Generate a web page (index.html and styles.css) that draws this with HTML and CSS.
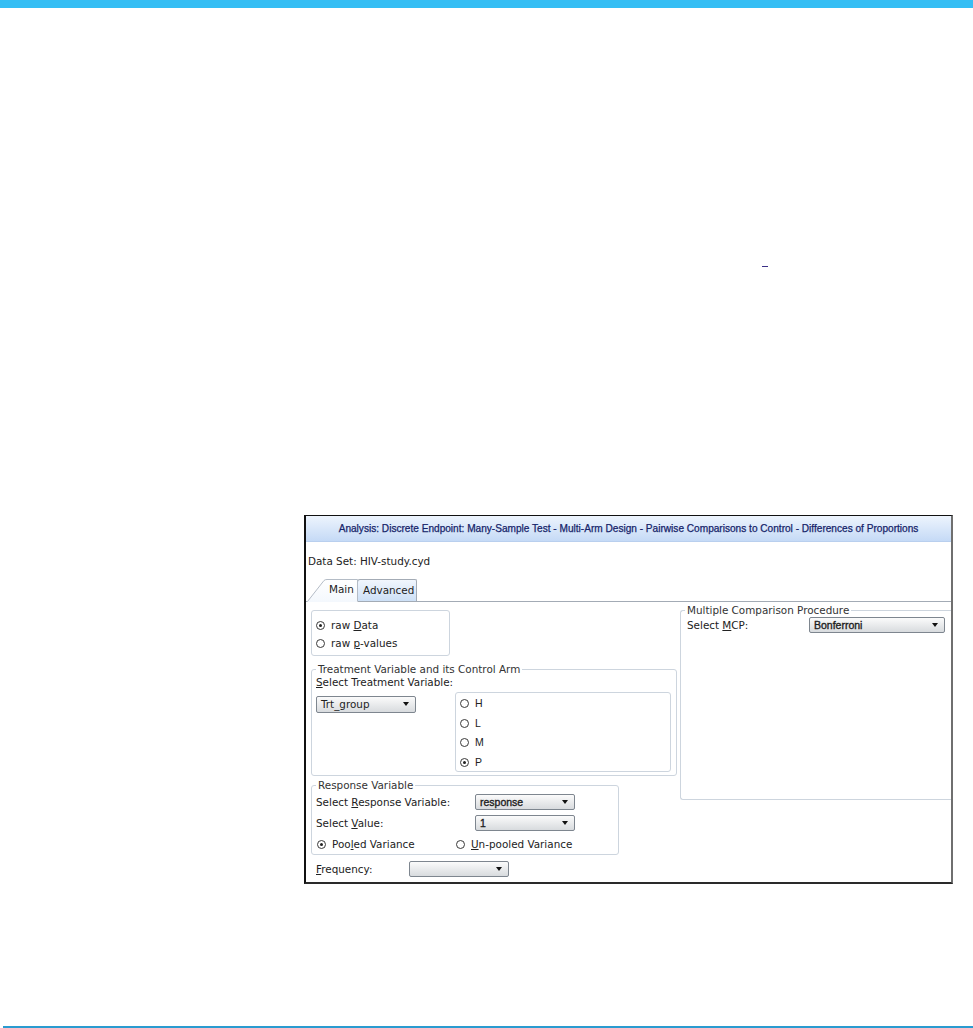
FILE: index.html
```html
<!DOCTYPE html>
<html lang="en">
<head>
    <meta charset="UTF-8">
    <title>Analysis: Discrete Endpoint</title>
    <link rel="stylesheet" href="styles.css">
</head>
<body>
    <div class="topbar"></div>
    <div class="page">
        <div class="note-row"><span class="link-mark"></span></div>

        <div class="dialog">
            <div class="dialog-title">Analysis: Discrete Endpoint: Many-Sample Test - Multi-Arm Design - Pairwise Comparisons to Control - Differences of Proportions</div>
            <div class="dialog-body">
                <div class="dataset">Data Set: HIV-study.cyd</div>

                <div class="tabs">
                    <div class="tab tab-main">
                        <svg class="tab-shape" width="51" height="23" viewBox="0 0 51 23">
                            <defs>
                                <linearGradient id="tabfill" x1="0" y1="0" x2="0" y2="1">
                                    <stop offset="0" stop-color="#ffffff"/>
                                    <stop offset="1" stop-color="#f4f8fd"/>
                                </linearGradient>
                            </defs>
                            <path d="M0 23 L17 1.5 Q18 0.5 20 0.5 L50.5 0.5 L50.5 23 Z" fill="url(#tabfill)"/>
                            <path d="M0.5 22.5 L17 1.5 Q18 0.5 20 0.5 L50.5 0.5 L50.5 22" fill="none" stroke="#b4bcc6"/>
                        </svg>
                        <span class="tab-label">Main</span>
                    </div>
                    <div class="tab tab-adv">Advanced</div>
                </div>

                <div class="panel">
                    <div class="col-left">
                        <div class="box source-box">
                            <div class="radio-row"><span class="radio checked"></span>raw <u>D</u>ata</div>
                            <div class="radio-row"><span class="radio"></span>raw <u>p</u>-values</div>
                        </div>

                        <fieldset class="group treat">
                            <legend>Treatment Variable and its Control Arm</legend>
                            <div class="label-line"><u>S</u>elect Treatment Variable:</div>
                            <div class="treat-row">
                                <div class="combo combo-plain w100">Trt_group<span class="arrow"></span></div>
                                <div class="box arm-box">
                                    <div class="arm-row"><span class="radio"></span>H</div>
                                    <div class="arm-row"><span class="radio"></span>L</div>
                                    <div class="arm-row"><span class="radio"></span>M</div>
                                    <div class="arm-row"><span class="radio checked"></span>P</div>
                                </div>
                            </div>
                        </fieldset>

                        <fieldset class="group response">
                            <legend>Response Variable</legend>
                            <div class="field-row">
                                <span class="field-label resp-label">Select <u>R</u>esponse Variable:</span>
                                <div class="combo w100">response<span class="arrow"></span></div>
                            </div>
                            <div class="field-row">
                                <span class="field-label resp-label">Select <u>V</u>alue:</span>
                                <div class="combo w100">1<span class="arrow"></span></div>
                            </div>
                            <div class="field-row">
                                <span class="variance"><span class="radio checked"></span>Poo<u>l</u>ed Variance</span>
                                <span class="variance"><span class="radio"></span><u>U</u>n-pooled Variance</span>
                            </div>
                        </fieldset>

                        <div class="field-row freq-row">
                            <span class="field-label freq-label"><u>F</u>requency:</span>
                            <div class="combo w100"><span class="arrow"></span></div>
                        </div>
                    </div>

                    <div class="col-right">
                        <fieldset class="group mcp">
                            <legend>Multiple Comparison Procedure</legend>
                            <div class="field-row mcp-row">
                                <span class="field-label mcp-label">Select <u>M</u>CP:</span>
                                <div class="combo w136">Bonferroni<span class="arrow"></span></div>
                            </div>
                        </fieldset>
                    </div>
                </div>
            </div>
        </div>

        <div class="footer-line"></div>
    </div>
</body>
</html>
```

FILE: styles.css
```css
body {
    margin: 0;
    background-color: #ffffff;
    font-family: "DejaVu Sans", Verdana, sans-serif;
    font-size: 10.4px;
    color: #222;
}
.topbar {
    height: 8px;
    background-color: #35bef4;
}
.note-row {
    padding: 258px 0 0 762px;
    height: 1px;
}
.link-mark {
    display: block;
    width: 6px;
    height: 1px;
    background-color: #3b2f86;
}

/* dialog screenshot */
.dialog {
    box-sizing: border-box;
    width: 649px;
    height: 369px;
    margin: 248px 0 0 304px;
    border-top: 1px solid #111;
    border-left: 2px solid #111;
    border-right: 2px solid #6f6f6f;
    border-bottom: 2px solid #2a2a2a;
    overflow: hidden;
    background-color: #fff;
}
.dialog-title {
    height: 25px;
    line-height: 26px;
    border-bottom: 1px solid #b9cfee;
    background: linear-gradient(#edf4fd, #c5daf6);
    text-align: center;
    font-family: "Liberation Sans", Arial, sans-serif;
    font-size: 10.1px;
    color: #16246a;
    -webkit-text-stroke: 0.25px #16246a;
    white-space: nowrap;
}
.dialog-body {
    padding-top: 12px;
}
.dataset {
    height: 14px;
    line-height: 14px;
    padding-left: 2px;
}

/* tabs */
.tabs {
    display: flex;
    align-items: flex-end;
    height: 21px;
    margin-top: 12px;
    border-bottom: 1px solid #a3abb5;
}
.tab {
    box-sizing: border-box;
    height: 22px;
    line-height: 20px;
}
.tab-main {
    position: relative;
    width: 51px;
    height: 23px;
    margin-left: 1px;
    margin-bottom: -1px;
    z-index: 1;
}
.tab-shape {
    position: absolute;
    left: 0;
    top: 0;
}
.tab-label {
    position: relative;
    display: block;
    padding-left: 22px;
    line-height: 21px;
}
.tab-adv {
    width: 60px;
    margin-left: -1px;
    padding-left: 5px;
    border: 1px solid #a3abb5;
    border-bottom: none;
    border-radius: 3px 2px 0 0;
    background: linear-gradient(#f1f6fd, #cde0f6);
    white-space: nowrap;
}

/* tab panel */
.panel {
    display: flex;
    align-items: flex-start;
    padding-left: 5px;
}
.col-left {
    width: 366px;
    margin-top: 8px;
}
.col-right {
    flex: 1;
    margin-left: 3px;
    margin-top: 2px;
}
.box {
    box-sizing: border-box;
    border: 1px solid #cdd5de;
    border-radius: 3px;
}
.source-box {
    width: 139px;
    height: 46px;
    padding: 5px 0 0 4px;
}
.radio-row {
    height: 18px;
    line-height: 18px;
}
.radio {
    display: inline-block;
    box-sizing: border-box;
    width: 9px;
    height: 9px;
    margin-right: 6px;
    border: 1px solid #3a3a3a;
    border-radius: 50%;
    vertical-align: -1px;
    background-color: #fff;
    position: relative;
}
.radio.checked::after {
    content: "";
    position: absolute;
    left: 2px;
    top: 2px;
    width: 3px;
    height: 3px;
    border-radius: 50%;
    background-color: #222;
}

/* group boxes */
.group {
    box-sizing: border-box;
    margin: 0;
    border: 1px solid #cdd5de;
    border-radius: 3px;
    min-width: 0;
}
.group legend {
    padding: 0 2px;
    line-height: 12px;
    color: #333;
}
.treat {
    width: 366px;
    margin-top: 7px;
    padding: 0 4px 3px 4px;
}
.label-line {
    height: 14px;
    line-height: 14px;
}
.treat-row {
    display: flex;
    align-items: flex-start;
    margin-top: 3px;
}
.treat-row .combo {
    margin-top: 4px;
}
.arm-box {
    width: 216px;
    height: 80px;
    margin-left: 39px;
    padding: 1px 0 0 4px;
}
.arm-row {
    height: 19.5px;
    line-height: 19.5px;
    font-family: "Liberation Sans", Arial, sans-serif;
    font-size: 10.5px;
}
.response {
    width: 308px;
    margin-top: 3px;
    padding: 0 4px 0 4px;
}
.field-row {
    display: flex;
    align-items: center;
    height: 21px;
}
.field-label {
    flex: none;
}
.resp-label {
    width: 159px;
}
.variance {
    width: 138px;
    padding-left: 1px;
    white-space: nowrap;
}
.freq-row {
    height: 20px;
    margin-top: 4px;
}
.freq-label {
    width: 93px;
    padding-left: 5px;
}
.mcp {
    height: 196px;
    padding: 0 0 0 6px;
    border-right: none;
    border-radius: 3px 0 0 3px;
}
.mcp legend {
    margin-left: -2px;
}
.mcp-row {
    height: 18px;
}
.mcp-label {
    width: 122px;
}

/* combo boxes */
.combo {
    position: relative;
    box-sizing: border-box;
    height: 16px;
    line-height: 14px;
    padding-left: 4px;
    border: 1px solid #7e868f;
    border-radius: 2px;
    background: linear-gradient(#fbfbfb, #d8dbde);
    font-family: "Liberation Sans", Arial, sans-serif;
    font-size: 10.5px;
    color: #1e1e1e;
    -webkit-text-stroke: 0.35px #1e1e1e;
}
.combo-plain {
    height: 17px;
    line-height: 15px;
    font-family: "DejaVu Sans", Verdana, sans-serif;
    font-size: 10.4px;
    -webkit-text-stroke: 0;
}
.w100 {
    width: 100px;
}
.w136 {
    width: 136px;
}
.arrow {
    position: absolute;
    right: 6px;
    top: 5px;
    width: 0;
    height: 0;
    border-left: 3px solid transparent;
    border-right: 3px solid transparent;
    border-top: 4px solid #111;
}

.footer-line {
    height: 2px;
    margin: 142px 0 0 3px;
    background-color: #2a9bd0;
}
```
